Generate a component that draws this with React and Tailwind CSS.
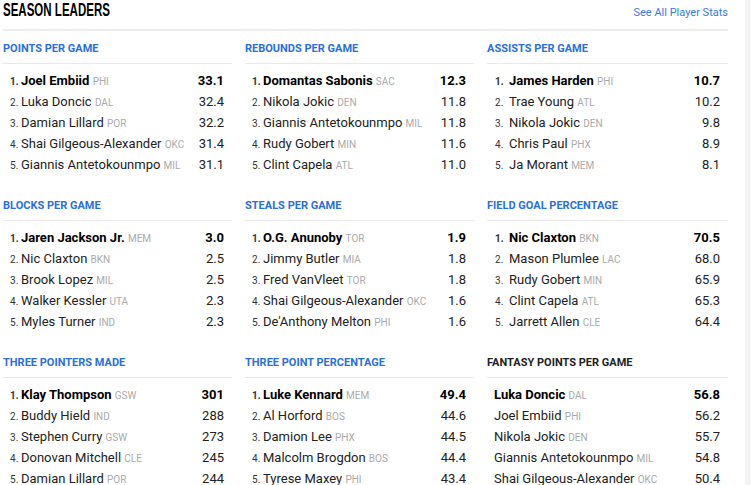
const sections = [
  {
    title: "Points Per Game",
    rows: [
      ["Joel Embiid", "PHI", "33.1"],
      ["Luka Doncic", "DAL", "32.4"],
      ["Damian Lillard", "POR", "32.2"],
      ["Shai Gilgeous-Alexander", "OKC", "31.4"],
      ["Giannis Antetokounmpo", "MIL", "31.1"],
    ],
  },
  {
    title: "Rebounds Per Game",
    rows: [
      ["Domantas Sabonis", "SAC", "12.3"],
      ["Nikola Jokic", "DEN", "11.8"],
      ["Giannis Antetokounmpo", "MIL", "11.8"],
      ["Rudy Gobert", "MIN", "11.6"],
      ["Clint Capela", "ATL", "11.0"],
    ],
  },
  {
    title: "Assists Per Game",
    rows: [
      ["James Harden", "PHI", "10.7"],
      ["Trae Young", "ATL", "10.2"],
      ["Nikola Jokic", "DEN", "9.8"],
      ["Chris Paul", "PHX", "8.9"],
      ["Ja Morant", "MEM", "8.1"],
    ],
  },
  {
    title: "Blocks Per Game",
    rows: [
      ["Jaren Jackson Jr.", "MEM", "3.0"],
      ["Nic Claxton", "BKN", "2.5"],
      ["Brook Lopez", "MIL", "2.5"],
      ["Walker Kessler", "UTA", "2.3"],
      ["Myles Turner", "IND", "2.3"],
    ],
  },
  {
    title: "Steals Per Game",
    rows: [
      ["O.G. Anunoby", "TOR", "1.9"],
      ["Jimmy Butler", "MIA", "1.8"],
      ["Fred VanVleet", "TOR", "1.8"],
      ["Shai Gilgeous-Alexander", "OKC", "1.6"],
      ["De'Anthony Melton", "PHI", "1.6"],
    ],
  },
  {
    title: "Field Goal Percentage",
    rows: [
      ["Nic Claxton", "BKN", "70.5"],
      ["Mason Plumlee", "LAC", "68.0"],
      ["Rudy Gobert", "MIN", "65.9"],
      ["Clint Capela", "ATL", "65.3"],
      ["Jarrett Allen", "CLE", "64.4"],
    ],
  },
  {
    title: "Three Pointers Made",
    rows: [
      ["Klay Thompson", "GSW", "301"],
      ["Buddy Hield", "IND", "288"],
      ["Stephen Curry", "GSW", "273"],
      ["Donovan Mitchell", "CLE", "245"],
      ["Damian Lillard", "POR", "244"],
    ],
  },
  {
    title: "Three Point Percentage",
    rows: [
      ["Luke Kennard", "MEM", "49.4"],
      ["Al Horford", "BOS", "44.6"],
      ["Damion Lee", "PHX", "44.5"],
      ["Malcolm Brogdon", "BOS", "44.4"],
      ["Tyrese Maxey", "PHI", "43.4"],
    ],
  },
  {
    title: "Fantasy Points Per Game",
    fantasy: true,
    rows: [
      ["Luka Doncic", "DAL", "56.8"],
      ["Joel Embiid", "PHI", "56.2"],
      ["Nikola Jokic", "DEN", "55.7"],
      ["Giannis Antetokounmpo", "MIL", "54.8"],
      ["Shai Gilgeous-Alexander", "OKC", "50.4"],
    ],
  },
]

function LeaderTable({ section, wide }) {
  return (
    <div>
      <div
        className={
          "border-b border-[#e8e8e8] pt-[10px] pb-[6px] text-[11px] leading-[16px] font-bold uppercase " +
          (section.fantasy ? "text-[#222]" : "text-[#2b6fd8]")
        }
      >
        {section.title}
      </div>
      <div className="pt-[6px]">
        {section.rows.map(([name, team, value], i) => (
          <div
            key={name}
            className={
              "flex h-[21px] items-baseline pl-[7px] pr-[8px] text-[13px] leading-[21px] " +
              (i === 0 ? "font-bold text-black" : "text-[#222]")
            }
          >
            {!section.fantasy && (
              <span className={(wide ? "w-[15px] pl-[1px] " : "w-[11px] ") + "shrink-0 text-[10px] text-[#333]"}>
                {i + 1}.
              </span>
            )}
            <span className="flex-1 truncate">
              {name} <span className="text-[10px] font-normal text-[#aaa]">{team}</span>
            </span>
            <span className="shrink-0">{value}</span>
          </div>
        ))}
      </div>
    </div>
  )
}

export default function App() {
  return (
    <div className="flex h-[485px] w-full overflow-hidden bg-white font-['Roboto',sans-serif]">
      <div className="w-[745px] shrink-0 pl-[3px] pr-[17px]">
        {/* Header */}
        <div className="flex h-[31px] items-start justify-between border-b-2 border-[#eeeeee]">
          <h2 className="font-['Liberation_Sans_Narrow','Liberation_Sans',sans-serif] text-[18px] leading-[20px] font-bold text-black">
            <span className="inline-block origin-left scale-x-[0.64] whitespace-nowrap">SEASON LEADERS</span>
          </h2>
          <a className="mt-[5px] text-[11px] leading-[16px] text-[#3b78dc]">See All Player Stats</a>
        </div>

        <div className="grid grid-cols-[229px_229px_241px] gap-x-[13px] gap-y-[13px]">
          {sections.map((s, idx) => (
            <LeaderTable key={s.title} section={s} wide={idx % 3 === 2} />
          ))}
        </div>
      </div>
      <div className="flex-1 bg-[#f5f5f5]" />
    </div>
  )
}
